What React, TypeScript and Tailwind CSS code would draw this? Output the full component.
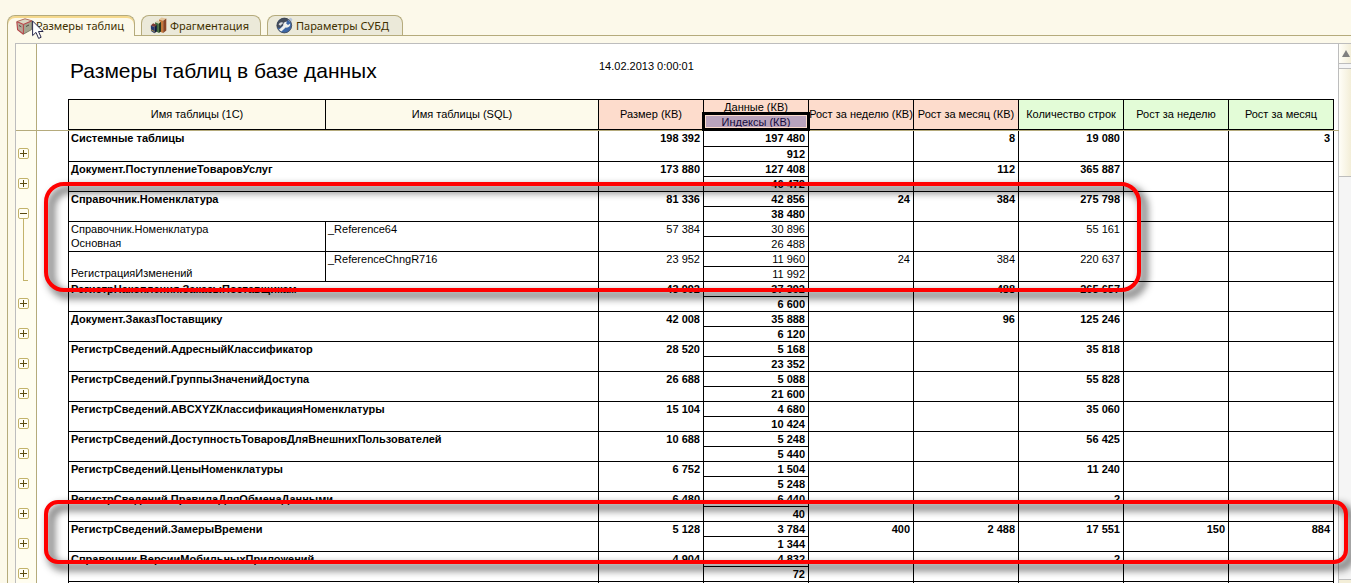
import { Fragment } from 'react';

type Entry = {
  name: string;
  sub?: string;
  sql?: string;
  values: [string, string, string, string, string, string, string, string];
};

// values: size, data, indexes, week KB, month KB, rows, week rows, month rows
const entries: Entry[] = [
  { name: 'Системные таблицы', values: ['198 392', '197 480', '912', '', '8', '19 080', '', '3'] },
  { name: 'Документ.ПоступлениеТоваровУслуг', values: ['173 880', '127 408', '46 472', '', '112', '365 887', '', ''] },
  { name: 'Справочник.Номенклатура', values: ['81 336', '42 856', '38 480', '24', '384', '275 798', '', ''] },
  { name: 'Справочник.Номенклатура', sub: 'Основная', sql: '_Reference64', values: ['57 384', '30 896', '26 488', '', '', '55 161', '', ''] },
  { name: '', sub: 'РегистрацияИзменений', sql: '_ReferenceChngR716', values: ['23 952', '11 960', '11 992', '24', '384', '220 637', '', ''] },
  { name: 'РегистрНакопления.ЗаказыПоставщикам', values: ['43 992', '37 392', '6 600', '', '488', '265 657', '', ''] },
  { name: 'Документ.ЗаказПоставщику', values: ['42 008', '35 888', '6 120', '', '96', '125 246', '', ''] },
  { name: 'РегистрСведений.АдресныйКлассификатор', values: ['28 520', '5 168', '23 352', '', '', '35 818', '', ''] },
  { name: 'РегистрСведений.ГруппыЗначенийДоступа', values: ['26 688', '5 088', '21 600', '', '', '55 828', '', ''] },
  { name: 'РегистрСведений.ABCXYZКлассификацияНоменклатуры', values: ['15 104', '4 680', '10 424', '', '', '35 060', '', ''] },
  { name: 'РегистрСведений.ДоступностьТоваровДляВнешнихПользователей', values: ['10 688', '5 248', '5 440', '', '', '56 425', '', ''] },
  { name: 'РегистрСведений.ЦеныНоменклатуры', values: ['6 752', '1 504', '5 248', '', '', '11 240', '', ''] },
  { name: 'РегистрСведений.ПравилаДляОбменаДанными', values: ['6 480', '6 440', '40', '', '', '2', '', ''] },
  { name: 'РегистрСведений.ЗамерыВремени', values: ['5 128', '3 784', '1 344', '400', '2 488', '17 551', '150', '884'] },
  { name: 'Справочник.ВерсииМобильныхПриложений', values: ['4 904', '4 832', '72', '', '', '2', '', ''] },
  { name: '', values: ['', '', '', '', '', '', '', ''] },
];

function BoxIcon() {
  return (
    <svg viewBox="0 0 17 17" className="size-[17px] shrink-0" aria-hidden="true">
      <path d="M.8 3.6 9 .8 16 2.8 15.6 11.6 7.4 16.2 1.6 11.8Z" fill="#a9a897" />
      <path d="M.8 3.6 9 .8 16 2.8 7.4 6.4Z" fill="#dcd8c4" />
      <path d="M.8 3.6 7.4 6.4V16.2L1.6 11.8Z" fill="#b5a898" />
      <path d="M7.4 6.4 16 2.8 15.6 11.6 7.4 16.2Z" fill="#a3a48f" />
      <path d="M.8 3.6 7.4 6.4 16 2.8M7.4 6.4V16.2M.8 3.6 1.6 11.8 7.4 16.2" fill="none" stroke="#b8474a" strokeWidth="1.1" />
      <path d="M.8 3.6 9 .8 16 2.8" fill="none" stroke="#a55a4e" strokeWidth=".8" />
      <path d="M7.4 16.2 15.6 11.6 16 2.8" fill="none" stroke="#6c6a58" strokeWidth=".7" />
      <path d="M3 7.5 5.3 8.8M10 8.5 13 7" stroke="#4d4a40" strokeWidth="1" />
    </svg>
  );
}

function BooksIcon() {
  return (
    <svg viewBox="0 0 17 17" className="size-[17px] shrink-0" aria-hidden="true">
      <path d="M9 2.5 11.5.6 16.3 1.6 13.2 3.8Z" fill="#e3c49a" />
      <path d="M9 2.5 13.2 3.8V16L9.4 14.5Z" fill="#c5773a" />
      <path d="M13.2 3.8 16.3 1.6V13.5L13.2 16Z" fill="#8a4526" />
      <path d="M5 5.2 7.5 3.6 11 4.8 8.8 6.8Z" fill="#d7d0ad" />
      <path d="M5 5.2 8.8 6.8V16L5.4 14Z" fill="#3f6b3c" />
      <path d="M8.8 6.8 11 4.8V14.5L8.8 16Z" fill="#24391f" />
      <path d="M.8 8.5 3.2 6.3 6.8 8 4.4 10Z" fill="#7a3a34" />
      <path d="M.8 8.5 4.4 10V16.2L1 14Z" fill="#26386c" />
      <path d="M4.4 10 6.8 8V14.5L4.4 16.2Z" fill="#121a3c" />
      <path d="M1 12.8 4.4 14.6" stroke="#c9a13b" strokeWidth=".8" />
    </svg>
  );
}

function WrenchIcon() {
  return (
    <svg viewBox="0 0 17 17" className="size-[17px] shrink-0" aria-hidden="true">
      <circle cx="8.3" cy="8.5" r="7.4" fill="#3d66a4" />
      <path d="M1.2 10.5A7.4 7.4 0 0 1 12.5 2.4L8.5 7 4 11Z" fill="#454d5c" />
      <path d="M2.8 13 7.2 8.8C6.8 6.4 8.4 4.6 10.8 4.4L10.2 6.5 12 7.9 14.2 6.6C14.6 9.4 12.2 11.2 9.6 10.6L5.4 14.4Z" fill="#f0f1ee" />
      <path d="M2.6 7.6C3.6 5 6 4.8 7.4 5.8L4.4 8.8Z" fill="#d7dade" />
      <path d="M11.6 2.2 14.8.8 16.4 2.2 15.6 5 13.4 4.4Z" fill="#b9c6da" />
      <circle cx="8.3" cy="8.5" r="7.4" fill="none" stroke="#3a4350" strokeWidth=".8" />
    </svg>
  );
}

function Toggle({ open }: { open?: boolean }) {
  return (
    <button
      type="button"
      aria-label={open ? 'Свернуть' : 'Развернуть'}
      className="block size-[11px] rounded-xs border border-[#c3b36b] bg-[#fffef4]"
    >
      <svg viewBox="0 0 9 9" className="block size-[9px]" aria-hidden="true">
        <path d={open ? 'M1 4.5h7' : 'M1 4.5h7M4.5 1v7'} stroke="#5a4a10" strokeWidth="1" />
      </svg>
    </button>
  );
}

const num = 'border-r border-b border-black py-0 pr-[3px] pl-0 text-right align-top whitespace-nowrap';
const head = 'border-r border-b border-black px-0 pt-0 text-center align-middle font-normal whitespace-nowrap';

export default function App() {
  return (
    <div className="relative flex h-screen flex-col overflow-hidden bg-[#fcf9ea] pt-[15px] pl-[7px] font-['Liberation_Sans',Arial,sans-serif] text-[11px] leading-[14px] text-black">
      <nav className="relative z-10 flex h-5 items-end gap-[6px] font-['Noto_Sans',sans-serif] text-[#3f3000]" role="tablist">
        <button type="button" role="tab" aria-selected="true" className="-mb-px flex h-[21px] w-32 items-center gap-[3px] rounded-t-lg border border-b-0 border-[#b5ab7c] bg-[#fcf9ea] pl-2 whitespace-nowrap shadow-[inset_0_2px_0_#f5d98d]">
          <BoxIcon />
          <span>Размеры таблиц</span>
        </button>
        <button type="button" role="tab" aria-selected="false" className="flex h-5 w-[120px] items-center gap-[3px] rounded-t-lg border border-b-0 border-[#b5ab7c] bg-[#ebe9d9] pl-2 whitespace-nowrap">
          <BooksIcon />
          <span>Фрагментация</span>
        </button>
        <button type="button" role="tab" aria-selected="false" className="flex h-5 w-[136px] items-center gap-[3px] rounded-t-lg border border-b-0 border-[#b5ab7c] bg-[#ebe9d9] pl-2 whitespace-nowrap">
          <WrenchIcon />
          <span>Параметры СУБД</span>
        </button>
      </nav>

      <div className="flex min-h-0 flex-1 border-t border-l border-[#b5ab7c] pt-[7px] pl-[7px]">
        <main className="relative flex min-w-0 flex-1 overflow-hidden border-t border-l border-[#bdbdbd] bg-white">
          <aside className="w-[21px] shrink-0 border-r border-[#b5ab7c] bg-[#fffdf0] pt-[104px] pl-[2px]">
            {entries.map((e, i) => (
              <div key={i} className="h-[30px]">
                {e.sql ? (
                  <div className={e.sub === 'Основная' ? 'ml-[5px] h-full border-l border-[#c3b36b]' : 'ml-[5px] h-[13px] w-[5px] border-b border-l border-[#c3b36b]'} />
                ) : (
                  <>
                    <Toggle open={i === 2} />
                    {i === 2 && <div className="ml-[5px] h-[19px] border-l border-[#c3b36b]" />}
                  </>
                )}
              </div>
            ))}
          </aside>

          <section className="min-w-0 flex-1 pr-1 pl-[31px]">
            <header className="flex h-[55px] pl-0.5">
              <h1 className="w-[529px] shrink-0 pt-[15px] text-[21px] leading-6">Размеры таблиц в базе данных</h1>
              <time className="pt-[15px]">14.02.2013 0:00:01</time>
            </header>
            <table className="w-full table-fixed border-separate border-spacing-0 border-t border-l border-black">
              <colgroup>
                <col className="w-[257px]" />
                <col />
                <col className="w-[105px]" />
                <col className="w-[105px]" />
                <col className="w-[105px]" />
                <col className="w-[105px]" />
                <col className="w-[105px]" />
                <col className="w-[105px]" />
                <col className="w-[105px]" />
              </colgroup>
              <thead>
                <tr className="h-[15px]">
                  <th rowSpan={2} className={`${head} pb-0.5 bg-[#fdfaeb]`}>Имя таблицы (1С)</th>
                  <th rowSpan={2} className={`${head} pb-0.5 bg-[#fdfaeb]`}>Имя таблицы (SQL)</th>
                  <th rowSpan={2} className={`${head} pb-0.5 bg-[#fddccc]`}>Размер (КВ)</th>
                  <th className={`${head} pb-0 bg-[#fddccc]`}>Данные (КВ)</th>
                  <th rowSpan={2} className={`${head} pb-0.5 bg-[#fddccc]`}>Рост за неделю (КВ)</th>
                  <th rowSpan={2} className={`${head} pb-0.5 bg-[#fddccc]`}>Рост за месяц (КВ)</th>
                  <th rowSpan={2} className={`${head} pb-0.5 bg-[#e3fcd7]`}>Количество строк</th>
                  <th rowSpan={2} className={`${head} pb-0.5 bg-[#e3fcd7]`}>Рост за неделю</th>
                  <th rowSpan={2} className={`${head} pb-0.5 bg-[#e3fcd7]`}>Рост за месяц</th>
                </tr>
                <tr className="h-[15px]">
                  <th className={`${head} relative pb-0 bg-[#b9a3bc] text-[#140a3c]`}>
                    Индексы (КВ)
                    <span className="absolute -inset-x-0.5 -top-[3px] -bottom-0.5 z-10 border-3 border-black shadow-[inset_0_0_0_1px_#fddccc]" />
                  </th>
                </tr>
              </thead>
              <tbody>
                <tr className="h-px">
                  <td colSpan={9} className="h-px p-0" />
                </tr>
                {entries.map((e, i) => (
                  <Fragment key={i}>
                    <tr className={`${i === 0 ? 'h-4' : 'h-[15px]'} ${e.sql ? 'font-normal' : 'font-bold'}`}>
                      {e.sql ? (
                        <>
                          <td rowSpan={2} className="border-r border-b border-black p-0 pl-0.5 align-top">
                            <div className="h-[14px]">{e.name}</div>
                            <div>{e.sub}</div>
                          </td>
                          <td rowSpan={2} className="border-r border-b border-black p-0 pl-0.5 align-top">{e.sql}</td>
                        </>
                      ) : (
                        <td colSpan={2} rowSpan={2} className="border-r border-b border-black p-0 pl-0.5 align-top whitespace-nowrap">{e.name}</td>
                      )}
                      <td rowSpan={2} className={num}>{e.values[0]}</td>
                      <td className={num}>{e.values[1]}</td>
                      <td rowSpan={2} className={num}>{e.values[3]}</td>
                      <td rowSpan={2} className={num}>{e.values[4]}</td>
                      <td rowSpan={2} className={num}>{e.values[5]}</td>
                      <td rowSpan={2} className={num}>{e.values[6]}</td>
                      <td rowSpan={2} className={num}>{e.values[7]}</td>
                    </tr>
                    <tr className={e.sql ? 'h-[15px]' : 'h-[15px] font-bold'}>
                      <td className={num}>{e.values[2]}</td>
                    </tr>
                  </Fragment>
                ))}
              </tbody>
            </table>
          </section>

          <div className="flex w-[13px] shrink-0 flex-col border-l border-[#bdbdbd] bg-[#f5f5f5]">
            <button type="button" aria-label="Вверх" className="flex h-5 shrink-0 items-center justify-center border-b border-[#bdbdbd] bg-linear-to-r from-[#fffef8] to-[#f3eed8] pl-0.5">
              <svg viewBox="0 0 8 7" className="h-[7px] w-2" aria-hidden="true">
                <path d="M4 0 8 7H0Z" fill="#808080" />
              </svg>
            </button>
            <div className="mt-1 h-[109px] shrink-0 border-y border-[#bdbdbd] bg-linear-to-r from-[#fffef8] to-[#f3eed8]" />
            <div className="mt-auto h-1 border-t border-[#bdbdbd] bg-[#f3eed8]" />
          </div>

          <div className="absolute top-[86px] right-3 left-0 h-px bg-[#b5ab7c]" />
        </main>
      </div>

      <div className="pointer-events-none absolute top-[182px] right-[210px] left-[44px] z-20 h-[110px] rounded-[20px] border-4 border-[#ff0000] drop-shadow-[5px_5px_4px_rgba(0,0,0,0.95)]" />
      <div className="pointer-events-none absolute top-[500px] right-[3px] left-[44px] z-20 h-[64px] rounded-[14px] border-4 border-[#ff0000] drop-shadow-[5px_5px_4px_rgba(0,0,0,0.95)]" />

      <svg viewBox="0 0 13 20" className="pointer-events-none absolute top-[20px] left-[32px] z-30 h-5 w-[13px]" aria-hidden="true">
        <path d="M.6 1v14.6l3.4-3.2 2.6 6 2.5-1.1-2.6-5.8h4.7Z" fill="#fff" stroke="#26264a" strokeWidth="1" />
      </svg>
    </div>
  );
}
